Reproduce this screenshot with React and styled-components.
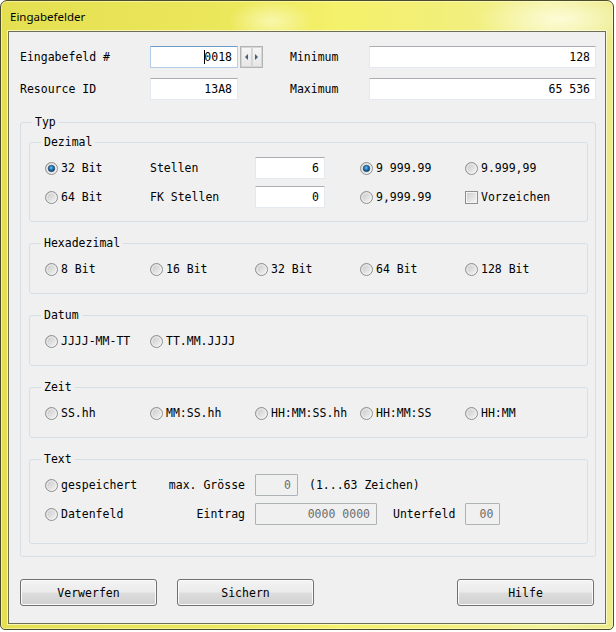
import React from 'react';
import styled, { createGlobalStyle } from 'styled-components';

const GlobalStyle = createGlobalStyle`
  html, body {
    margin: 0;
    padding: 0;
    background: #ffffff;
  }
  body {
    font-family: 'DejaVu Sans Mono', 'Liberation Mono', monospace;
    font-size: 11.5px;
    color: #000;
  }
`;

const Window = styled.div`
  box-sizing: border-box;
  width: 614px;
  height: 630px;
  display: flex;
  flex-direction: column;
  padding: 0 7px 5px 7px;
  border: 1px solid #4d4c2a;
  border-radius: 7px 7px 5px 5px;
  background:
    radial-gradient(ellipse 120px 40px at 560px 18px, rgba(255, 255, 235, 0.75), rgba(255, 255, 235, 0) 70%),
    radial-gradient(ellipse 60px 30px at 270px 20px, rgba(255, 255, 220, 0.6), rgba(255, 255, 220, 0) 70%),
    linear-gradient(to right, #e4e052 0%, #ebe75a 35%, #f4f16a 55%, #f2ef7c 75%, #f3f29a 90%, #ecea86 100%);
  box-shadow: inset 0 0 0 1px rgba(255, 255, 215, 0.55);
`;

const TitleBar = styled.div`
  height: 30px;
  display: flex;
  align-items: center;
  padding: 1px 0 0 2px;
  box-sizing: border-box;
  font-family: 'Noto Sans', 'Open Sans', sans-serif;
  font-size: 11.5px;
  color: #000;
`;

const Client = styled.div`
  flex: 1;
  display: flex;
  flex-direction: column;
  padding: 14px 9px 0 11px;
  background: #f0f0f0;
  border: 1px solid #6e6d55;
  box-shadow: 0 0 0 1px rgba(255, 255, 225, 0.7);
`;

const HeaderGrid = styled.div`
  display: grid;
  grid-template-columns: 130px 88px 25px 27px 79px 1fr;
  grid-auto-rows: 22px;
  row-gap: 10px;
  align-items: center;
`;

const Label = styled.span`
  white-space: nowrap;
  text-align: ${(p) => (p.$right ? 'right' : 'left')};
  padding-right: ${(p) => (p.$right ? '10px' : '0')};
`;

const Field = styled.div`
  box-sizing: border-box;
  width: ${(p) => (p.$w ? `${p.$w}px` : '100%')};
  height: 22px;
  line-height: 20px;
  padding-right: ${(p) => (p.$disabled ? '6px' : '5px')};
  text-align: right;
  white-space: nowrap;
  color: ${(p) => (p.$disabled ? '#6d6d6d' : '#000')};
  background: ${(p) => (p.$disabled ? '#f0f0f0' : '#fff')};
  border: 1px solid ${(p) => (p.$disabled ? '#adb2b5' : p.$focus ? '#b3cde8' : '#e3e9ef')};
  border-top-color: ${(p) => (p.$disabled ? '#adb2b5' : p.$focus ? '#6a9ccc' : '#abadb3')};
  border-radius: 1px;
`;

const Caret = styled.span`
  border-left: 1px solid #000;
  margin-right: -1px;
`;

const Spinner = styled.div`
  display: flex;
  width: 23px;
  height: 22px;
  margin-left: 2px;
  box-sizing: border-box;
  border: 1px solid #b4b4b4;
  background: #f4f4f4;
`;

const SpinButton = styled.div`
  flex: 1;
  display: flex;
  align-items: center;
  justify-content: center;
  border: 1px solid #d6d6d6;
  background: linear-gradient(#f6f6f6, #e6e6e6);
  &::after {
    content: '';
    border-top: 3px solid transparent;
    border-bottom: 3px solid transparent;
    border-${(p) => (p.$dir === 'left' ? 'right' : 'left')}: 3px solid #4a5c70;
  }
`;

const Group = styled.fieldset`
  margin: ${(p) => (p.$first ? '0' : '14px')} 0 0 0;
  padding: 8px 8px ${(p) => p.$bottom || 13}px 8px;
  min-inline-size: 0;
  border: 1px solid #d5dfe5;
  border-radius: 3px;
`;

const Outer = styled(Group)`
  margin-top: 15px;
  padding: 6px 7px 12px 8px;
`;

const Legend = styled.legend`
  margin-left: 3px;
  padding: 0 3px;
  line-height: 14px;
`;

const OptionGrid = styled.div`
  display: grid;
  margin-left: 7px;
  grid-template-columns: ${(p) => p.$cols || 'repeat(5, 105px)'};
  grid-auto-rows: 22px;
  row-gap: ${(p) => p.$gap || 7}px;
  align-items: center;
`;

const OptionWrap = styled.label`
  display: flex;
  align-items: center;
  gap: 3px;
  white-space: nowrap;
`;

const Inline = styled.div`
  display: flex;
  align-items: center;
  white-space: nowrap;
`;

const After = styled.span`
  margin-left: ${(p) => p.$gap}px;
`;

const Box = styled.span`
  box-sizing: border-box;
  width: 13px;
  height: 13px;
  border: 1px solid #8e8f8f;
  box-shadow: inset 0 0 0 1px #f4f4f4;
  background: linear-gradient(135deg, #cbcbcb, #f7f7f7);
`;

const ButtonRow = styled.div`
  display: flex;
  gap: 20px;
  margin-top: 22px;
  padding-right: 2px;
`;

const Button = styled.button`
  width: 137px;
  height: 27px;
  padding: 0;
  border: 1px solid #707070;
  border-radius: 3px;
  background: linear-gradient(#f3f3f3 0%, #ebebeb 48%, #dddddd 52%, #d0d0d0 100%);
  box-shadow: inset 0 0 0 1px #fbfbfb;
  font-family: inherit;
  font-size: 11.5px;
  color: #000;
  margin-left: ${(p) => (p.$push ? 'auto' : '0')};
`;

function Radio({ checked }) {
  return (
    <svg width="13" height="13" viewBox="0 0 13 13">
      <defs>
        <linearGradient id="radioFill" x1="0" y1="0" x2="1" y2="1">
          <stop offset="0" stopColor="#c4c4c4" />
          <stop offset="1" stopColor="#f8f8f8" />
        </linearGradient>
        <radialGradient id="radioDot" cx="0.45" cy="0.4" r="0.6">
          <stop offset="0" stopColor="#6cc3f5" />
          <stop offset="0.55" stopColor="#1f6fae" />
          <stop offset="1" stopColor="#0b3b66" />
        </radialGradient>
      </defs>
      <circle cx="6.5" cy="6.5" r="6" fill="url(#radioFill)" stroke="#8e8f8f" />
      <circle cx="6.5" cy="6.5" r="4.6" fill="none" stroke="#f2f2f2" strokeWidth="0.8" />
      {checked && <circle cx="6.5" cy="6.5" r="3.3" fill="url(#radioDot)" stroke="#1c4466" strokeWidth="0.5" />}
    </svg>
  );
}

function Option({ checked, children }) {
  return (
    <OptionWrap>
      <Radio checked={checked} />
      <span>{children}</span>
    </OptionWrap>
  );
}

const hexOptions = ['8 Bit', '16 Bit', '32 Bit', '64 Bit', '128 Bit'];
const timeOptions = ['SS.hh', 'MM:SS.hh', 'HH:MM:SS.hh', 'HH:MM:SS', 'HH:MM'];

export default function App() {
  return (
    <>
      <GlobalStyle />
      <Window>
        <TitleBar>Eingabefelder</TitleBar>
        <Client>
          <HeaderGrid>
            <Label>Eingabefeld #</Label>
            <Field $focus>
              <Caret />
              0018
            </Field>
            <Spinner>
              <SpinButton $dir="left" />
              <SpinButton $dir="right" />
            </Spinner>
            <span />
            <Label>Minimum</Label>
            <Field>128</Field>

            <Label>Resource ID</Label>
            <Field>13A8</Field>
            <span />
            <span />
            <Label>Maximum</Label>
            <Field>65 536</Field>
          </HeaderGrid>

          <Outer $first>
            <Legend>Typ</Legend>

            <Group $first>
              <Legend>Dezimal</Legend>
              <OptionGrid>
                <Option checked>32 Bit</Option>
                <Label>Stellen</Label>
                <Field $w={70}>6</Field>
                <Option checked>9 999.99</Option>
                <Option>9.999,99</Option>

                <Option>64 Bit</Option>
                <Label>FK Stellen</Label>
                <Field $w={70}>0</Field>
                <Option>9,999.99</Option>
                <OptionWrap>
                  <Box />
                  <span>Vorzeichen</span>
                </OptionWrap>
              </OptionGrid>
            </Group>

            <Group>
              <Legend>Hexadezimal</Legend>
              <OptionGrid>
                {hexOptions.map((o) => (
                  <Option key={o}>{o}</Option>
                ))}
              </OptionGrid>
            </Group>

            <Group>
              <Legend>Datum</Legend>
              <OptionGrid>
                <Option>JJJJ-MM-TT</Option>
                <Option>TT.MM.JJJJ</Option>
              </OptionGrid>
            </Group>

            <Group>
              <Legend>Zeit</Legend>
              <OptionGrid>
                {timeOptions.map((o) => (
                  <Option key={o}>{o}</Option>
                ))}
              </OptionGrid>
            </Group>

            <Group $bottom={18}>
              <Legend>Text</Legend>
              <OptionGrid $cols="105px 105px 1fr">
                <Option>gespeichert</Option>
                <Label $right>max. Grösse</Label>
                <Inline>
                  <Field $w={43} $disabled>0</Field>
                  <After $gap={11}>(1...63 Zeichen)</After>
                </Inline>

                <Option>Datenfeld</Option>
                <Label $right>Eintrag</Label>
                <Inline>
                  <Field $w={122} $disabled>0000 0000</Field>
                  <After $gap={16}>Unterfeld</After>
                  <After $gap={10}>
                    <Field $w={35} $disabled>00</Field>
                  </After>
                </Inline>
              </OptionGrid>
            </Group>
          </Outer>

          <ButtonRow>
            <Button>Verwerfen</Button>
            <Button>Sichern</Button>
            <Button $push>Hilfe</Button>
          </ButtonRow>
        </Client>
      </Window>
    </>
  );
}
